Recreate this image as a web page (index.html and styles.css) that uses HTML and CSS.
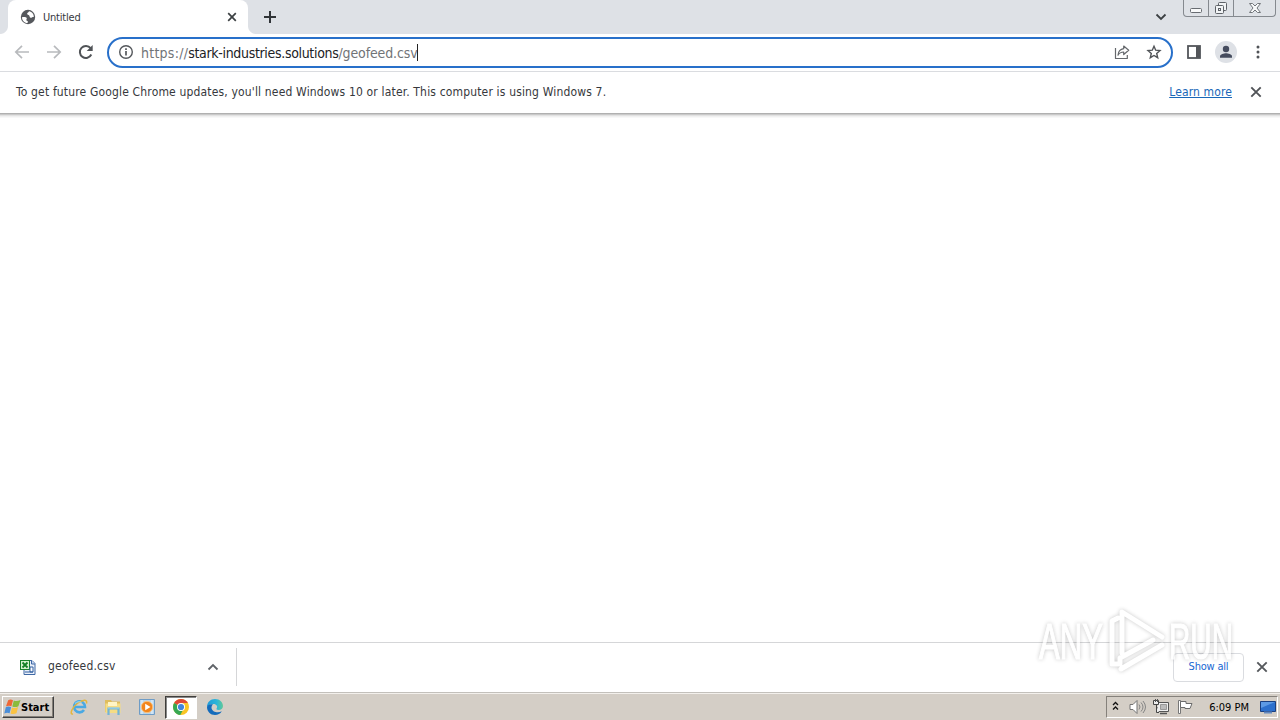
FILE: index.html
```html
<!DOCTYPE html>
<html lang="en">
<head>
<meta charset="utf-8">
<title>Untitled</title>
<link rel="stylesheet" href="styles.css">
</head>
<body>
<div class="screen">
  <header class="tabstrip">
    <div class="tab">
      <svg class="globe" width="16" height="16" viewBox="0 0 16 16"><circle cx="8" cy="8" r="7.200" fill="#55585c"/><path d="M2 8.200c1.800-.3 4.200-.3 4.700.8.4 1-.7 1.400-.3 2.300.4.700 1.700.5 1.500 1.700l-.5 1C4.300 13.800 2 11.500 2 8.200zM9 2.200c-.2 1.500-1.800 1.300-1.900 2.500-.1 1 1.400 1 2.100 1.800.7.900.1 1.900 1.300 2.200 1.200.3 1.500-.9 3.300-.7C14 5 12 2.700 9 2.200z" fill="#fff"/></svg>
      <span class="tab-title">Untitled</span>
      <svg class="tab-close" width="10" height="10" viewBox="0 0 10 10"><path d="M1.200 1.200l7.600 7.600M8.800 1.200L1.200 8.800" stroke="#3c4043" stroke-width="1.700"/></svg>
    </div>
    <svg class="newtab" width="14" height="14" viewBox="0 0 14 14"><path d="M7 1v12M1 7h12" stroke="#303438" stroke-width="2"/></svg>
    <svg class="tabsearch" width="12" height="8" viewBox="0 0 12 8"><path d="M1.500 1.500L6 6l4.500-4.500" fill="none" stroke="#3c4043" stroke-width="1.800"/></svg>
    <div class="caption">
      <span class="cap min"><svg width="14" height="14" viewBox="0 0 14 14"><rect x="1.500" y="6.500" width="11" height="4" rx="1" fill="#f8f9fa" stroke="#686c72"/></svg></span>
      <span class="cap max"><svg width="14" height="14" viewBox="0 0 14 14"><g fill="#f1f3f5" stroke="#5e6268"><rect x="4.500" y=".5" width="8" height="8" rx="1"/><rect x="1.500" y="3.500" width="8" height="8" rx="1"/><rect x="4.500" y="6.500" width="2" height="2"/></g></svg></span>
      <span class="cap cls"><svg width="14" height="14" viewBox="0 0 14 14"><path d="M1.500 1.500h3L7 4l2.500-2.500h3L9 6l3.500 4.500h-3L7 8l-2.500 2.500h-3L5 6z" fill="#f8f9fa" stroke="#72767b"/></svg></span>
    </div>
  </header>

  <div class="toolbar">
    <svg class="nav" width="16" height="16" viewBox="0 0 16 16"><path d="M15 8H2M8 1.800L1.800 8 8 14.200" fill="none" stroke="#b8babd" stroke-width="1.700"/></svg>
    <svg class="nav" width="16" height="16" viewBox="0 0 16 16"><path d="M1 8h13M8 1.800L14.200 8 8 14.200" fill="none" stroke="#b8babd" stroke-width="1.700"/></svg>
    <svg class="nav" width="16" height="16" viewBox="0 0 16 16"><path d="M13.300 10.500A6 6 0 1 1 12.600 4.200" fill="none" stroke="#505357" stroke-width="2"/><path d="M14.700 1v6H8.700z" fill="#505357"/></svg>
    <div class="omnibox">
      <svg class="info" width="16" height="16" viewBox="0 0 16 16"><circle cx="8" cy="8" r="6.300" fill="none" stroke="#55585c" stroke-width="1.400"/><path d="M8 7v4.500M8 4.200v1.700" stroke="#55585c" stroke-width="1.700"/></svg>
      <span class="url"><span class="scheme">https://</span><span class="host">stark-industries.solutions</span><span class="path">/geofeed.csv</span></span><i class="caret"></i>
      <svg class="share" width="16" height="16" viewBox="0 0 16 16"><path d="M1.500 4v10.500h11.800V11M9.700 2l5 4.300-5 4.200V8C7 8 5.200 9 4 11.200 4.300 7.500 6.300 5.200 9.700 4.700z" fill="none" stroke="#65686c" stroke-width="1.200" stroke-linejoin="round"/></svg>
      <svg class="star" width="16" height="16" viewBox="0 0 16 16"><path d="M8 2.200l1.700 4 4.300.4-3.300 2.900 1 4.200L8 11.500l-3.700 2.200 1-4.200L2 6.600l4.300-.4z" fill="none" stroke="#505357" stroke-width="1.400"/></svg>
    </div>
    <svg class="panel" width="14" height="14" viewBox="0 0 14 14"><rect x="1" y="1" width="12" height="12" fill="none" stroke="#53565a" stroke-width="1.800"/><path d="M9 1h4v12H9z" fill="#53565a"/></svg>
    <svg class="avatar" width="22" height="22" viewBox="0 0 22 22"><circle cx="11" cy="11" r="11" fill="#dee1e6"/><circle cx="11" cy="8" r="3.200" fill="#454c5e"/><path d="M5 16.700v-1.500c0-2 4-3 6-3s6 1 6 3v1.500z" fill="#454c5e"/></svg>
    <svg class="menu" width="4" height="14" viewBox="0 0 4 14"><g fill="#505357"><circle cx="2" cy="2" r="1.500"/><circle cx="2" cy="7" r="1.500"/><circle cx="2" cy="12" r="1.500"/></g></svg>
  </div>

  <div class="infobar">
    <span class="message">To get future Google Chrome updates, you'll need Windows 10 or later. This computer is using Windows 7.</span>
    <a class="learn">Learn more</a>
    <svg class="x" width="12" height="12" viewBox="0 0 12 12"><path d="M1.300 1.300l9.400 9.400M10.700 1.300l-9.400 9.400" stroke="#505357" stroke-width="1.900"/></svg>
  </div>

  <main class="page"></main>

  <div class="downloads">
    <div class="item">
      <svg class="file" width="16" height="16" viewBox="0 0 16 16"><path d="M4 1.500h8l3 3v11H4z" fill="#eaf0fb" stroke="#3f68a5"/><path d="M11.500 1.500V5H15" fill="#c9d9f3" stroke="#3f68a5"/><rect x=".5" y="1.500" width="9" height="9" fill="#d5f2cf" stroke="#17832a"/><path d="M2.500 3.500l5 5M7.500 3.500l-5 5" stroke="#128126" stroke-width="1.800"/><path d="M10 8h3v5h-3zM5 13h8" fill="#fff" stroke="#315e9e"/></svg>
      <span class="filename">geofeed.csv</span>
      <svg class="chev" width="12" height="8" viewBox="0 0 12 8"><path d="M1.500 6.500L6 2l4.500 4.500" fill="none" stroke="#5f6368" stroke-width="1.800"/></svg>
    </div>
    <span class="showall">Show all</span>
    <svg class="x" width="12" height="12" viewBox="0 0 12 12"><path d="M1.300 1.300l9.400 9.400M10.700 1.300l-9.400 9.400" stroke="#55585c" stroke-width="1.900"/></svg>
  </div>

  <footer class="taskbar">
    <div class="start">
      <svg width="17" height="16" viewBox="0 0 17 16"><path d="M4.200 1.300C6 0 7.500.5 9 1.200L7.400 7.300C6 6.500 4.400 6.400 2 7.300z" fill="#ef6735"/><path d="M9.800 1.500c1.700.8 4.200.7 6.700-.4L14.400 7.200c-2 1.100-4.500 1.100-6.100.3z" fill="#8abb3d"/><path d="M1.800 8.200c1.700-.9 3.900-.7 5.300.1l-1.500 6c-1.500-.8-3-.9-5.300.1z" fill="#4b8ed8"/><path d="M8 8.500c1.600.8 4.100.7 6.100-.4L12.500 14.300c-2 1.100-4.400 1-6 .2z" fill="#fac342"/></svg>
      <b>Start</b>
    </div>
    <div class="quick">
      <span class="task"><svg width="18" height="18" viewBox="0 0 18 18"><path d="M14 12A5.500 5.500 0 1 1 15 9H5" fill="none" stroke="#4aa9e3" stroke-width="2.600"/><path d="M3 16C-1 17 2 9 8 5s9.500-3.500 8.500.5" fill="none" stroke="#e3b63e" stroke-width="1.500"/><path d="M5 5.500c1.600-1.800 4.500-2.300 6.500-1" stroke="#a2dcf7" fill="none"/></svg></span>
      <span class="task"><svg width="18" height="18" viewBox="0 0 18 18"><path d="M1 2h6l1 1.500h8V14H1z" fill="#dfbd5d"/><path d="M1.500 5.500h15V15h-15z" fill="#f5dc84"/><path d="M4 4h9v4H4z" fill="#fff5c6"/><path d="M4.500 17v-6.500h10V17" fill="none" stroke="#72b4d6" stroke-width="2.200"/><path d="M4 10h11" stroke="#a5d9ee"/></svg></span>
      <span class="task"><svg width="18" height="18" viewBox="0 0 18 18"><path d="M1.500 1.500h15v15h-15z" fill="#b9d5ec" stroke="#6e9cc6"/><path d="M4 2v14M14 2v14" stroke="#e8f4fc"/><circle cx="9" cy="9" r="5.700" fill="#f2851c" stroke="#fac17e"/><path d="M7.200 5.700L12.500 9l-5.300 3.300z" fill="#fff"/></svg></span>
      <span class="task active"><svg width="18" height="18" viewBox="0 0 18 18"><circle cx="9" cy="9" r="8" fill="#f9c525"/><path d="M9 9L2.100 5A8 8 0 0 1 15.900 5H9z" fill="#df4937"/><path d="M9 9L2.100 5A8 8 0 0 0 8.300 17L12 10z" fill="#37a853"/><circle cx="9" cy="9" r="4" fill="#fff"/><circle cx="9" cy="9" r="3.100" fill="#4285dc"/></svg></span>
      <span class="task"><svg width="18" height="18" viewBox="0 0 18 18"><defs><linearGradient id="eg"><stop stop-color="#209bd9"/><stop offset=".6" stop-color="#2cb5d8"/><stop offset="1" stop-color="#62c997"/></linearGradient></defs><path d="M1 9C1 4 4.500 1 9 1c5 0 8 3.500 8 7 0 2.500-2 4-4.300 4-2 0-2.700-.7-2-1.700C12 8.500 10.500 6 7.500 6 4 6 1.500 7.500 1 9z" fill="url(#eg)"/><path d="M1 9c.5-2 3.300-3.200 6-2.400C4.500 8.500 5 13 9.500 14c2.500.6 4.500.2 6.300-.8C14.300 15.700 12 17 9 17 4.500 17 1 13.500 1 9z" fill="#146bbb"/></svg></span>
    </div>
    <div class="tray">
      <svg class="expand" width="7" height="10" viewBox="0 0 7 10"><path d="M1 4l2.500-2.500L6 4M1 8.500L3.500 6 6 8.500" fill="none" stroke="#111" stroke-width="1.300"/></svg>
      <svg class="vol" width="17" height="16" viewBox="0 0 17 16"><path d="M1 5.500h3l4-4v13l-4-4H1z" fill="#fff" stroke="#747474"/><path d="M10 5.500q2 2.500 0 5M12 3.500q4 4.500 0 9M14 2q5 6 0 12" fill="none" stroke="#858585"/></svg>
      <svg class="net" width="17" height="16" viewBox="0 0 17 16"><path d="M6 3.500h9.500v9H4.500V8" fill="#eee" stroke="#555"/><path d="M7.500 5.500h6v5h-6z" fill="#bbb" stroke="#999"/><path d="M7 14.500h7" stroke="#555" stroke-width="1.500"/><path d="M.5 1.500h5v4h-5zM3.500 5.500V13.500H6" fill="#eee" stroke="#444"/><path d="M2.500 0v3M4.500 0v3" stroke="#555"/></svg>
      <svg class="flag" width="17" height="16" viewBox="0 0 17 16"><path d="M1.500 1.500h2v13h-2z" fill="#fff" stroke="#777"/><path d="M3.500 2.500h5.500v2h6l-2 5H8v-1H3.500z" fill="#fff" stroke="#6b6b6b"/></svg>
      <span class="clock">6:09 PM</span>
      <svg class="desk" width="16" height="14" viewBox="0 0 16 14"><path d="M.5 1.500h15v10H.5z" fill="#2c70cd" stroke="#193f80"/><path d="M1 2h14L1 8z" fill="#5c9ae5"/><path d="M4 12.500h8" stroke="#6389bf" stroke-width="2"/></svg>
    </div>
  </footer>

  <svg class="watermark" width="230" height="92" viewBox="-10 -8 230 92">
    <g class="mark"><text x="9" y="55" textLength="64" lengthAdjust="spacingAndGlyphs">ANY</text><text x="139" y="55" textLength="64" lengthAdjust="spacingAndGlyphs">RUN</text>
    <path class="logo" d="M92 49V8l40 25M88 14l-6 3v43h8v-6L123 36M91 65l41-24"/></g>
  </svg>
</div>
</body>
</html>
```
FILE: styles.css
```css
* { box-sizing: border-box; }
body { margin: 0; overflow: hidden; }
svg { display: block; flex: none; }
.screen { position: relative; width: 1280px; height: 720px; display: flex; flex-direction: column; background: #fff; font-family: "DejaVu Sans Condensed", "DejaVu Sans", sans-serif; font-stretch: condensed; color: #36383c; }
.tabstrip { height: 34px; flex: none; display: flex; background: radial-gradient(circle at 0 26px, transparent 8px, #fff 8.500px) 248px 26px / 8px 8px no-repeat, #dee1e6; background: radial-gradient(circle at 100% 0, #dee1e6 7.500px, #fff 8.500px) 248px 26px / 8px 8px no-repeat, radial-gradient(circle at 0 0, #dee1e6 7.500px, #fff 8.500px) 0 26px / 8px 8px no-repeat, #dee1e6; }
.tab { width: 240px; height: 34px; margin-left: 8px; padding: 0 11px 0 12px; display: flex; align-items: center; background: #fff; border-radius: 8px 8px 0 0; }
.tab-title { margin-left: 7px; font-size: 11px; letter-spacing: -.2px; }
.tab-close { margin-left: auto; }
.newtab { margin: 10px 0 0 15px; }
.tabsearch { margin: 13px 16px 0 auto; }
.caption { display: flex; width: 93px; height: 17px; margin-right: 4px; border: 1px solid #85898f; border-top: 0; border-radius: 0 0 4px 4px; background: #dfe2e7; }
.cap { display: flex; justify-content: center; padding-top: 2px; }
.min, .max { border-right: 1px solid #85898f; }
.min { width: 25px; }
.max { width: 25px; }
.cls { flex: 1; }
.toolbar { height: 38px; flex: none; display: flex; align-items: center; padding: 0 20px 2px 14px; border-bottom: 1px solid #dadce0; }
.nav { margin-right: 16px; }
.omnibox { width: 1066px; height: 31px; margin-left: -3px; margin-top: 1px; border: 2px solid #2870ca; border-radius: 16px; display: flex; align-items: center; padding: 0 9px 0 9px; }
.url { margin-left: 7px; padding-top: 2px; font-size: 14px; white-space: nowrap; }
.scheme, .path { color: #717477; }
.scheme { letter-spacing: .25px; }
.host { color: #202124; letter-spacing: -.32px; }
.path { letter-spacing: -.13px; }
.caret { width: 1px; height: 17px; background: #222; }
.share { margin-left: auto; }
.star { margin-left: 16px; }
.panel { margin-left: 14px; }
.avatar { margin-left: 14px; }
.menu { margin-left: auto; }
.infobar { height: 41px; flex: none; display: flex; align-items: center; padding: 0 18px 1px 16px; }
.message { font-size: 12px; letter-spacing: .162px; white-space: nowrap; }
.learn { margin-left: auto; margin-right: 18px; font-size: 12px; letter-spacing: .13px; color: #1967b8; text-decoration: underline; }
.page { flex: 1; background: linear-gradient(#b0b0b0 0 1px, #c9c9c9 1px 2px, #e2e2e2 2px 3px, #f0f0f0 3px 4px, #f8f8f8 4px 5px, #fff 5px); }
.downloads { height: 50px; flex: none; border-top: 1px solid #d5d6d8; display: flex; align-items: center; padding: 0 12px 1px 0; }
.item { width: 237px; height: 38px; padding: 0 18px 0 20px; display: flex; align-items: center; border-right: 1px solid #d5d6d8; }
.filename { margin-left: 12px; font-size: 12px; letter-spacing: .2px; position: relative; top: -1px; }
.chev { margin-left: auto; margin-right: -1px; }
.showall { width: 71px; height: 29px; margin-left: auto; margin-right: 12px; border: 1px solid #dadce0; border-radius: 4px; font-size: 11px; line-height: 26px; letter-spacing: -.2px; text-align: center; color: #1967d2; }
.taskbar { height: 28px; flex: none; display: flex; align-items: center; padding: 1px 2px 0 2px; background: #d4cec6; border-top: 1px solid #c3c0bb; box-shadow: inset 0 1px #f3f0ec; color: #000; }
.start { width: 52px; height: 22px; display: flex; align-items: center; padding-left: 1px; border: 1px solid; border-color: #fff #404040 #404040 #fff; box-shadow: inset -1px -1px #858078; font-size: 11px; }
.quick { display: flex; margin-left: 8px; }
.task { width: 34px; height: 23px; display: flex; align-items: center; justify-content: center; }
.active { width: 32px; margin: 0 1px; background: #fff; border: 1px solid; border-color: #403e3b #fff #fff #403e3b; box-shadow: inset 1px 1px #888; }
.tray { width: 172px; height: 22px; margin-left: auto; display: flex; align-items: center; border: 1px solid; border-color: #85817b #fff #fff #85817b; padding: 0 1px 0 5px; }
.expand { margin-bottom: 2px; }
.vol { margin-left: 10px; }
.net { margin-left: 7px; }
.flag { margin-left: 7px; }
.clock { margin-left: auto; margin-right: 11px; font-size: 11px; white-space: nowrap; }
.watermark { position: absolute; left: 1020px; top: 596px; pointer-events: none; }
.mark { filter: drop-shadow(0 0 2px rgba(0,0,0,.3)); opacity: .72; }
.mark text { font-family: "Liberation Sans", sans-serif; font-size: 50px; fill: #fff; stroke: #fff; stroke-width: 1.2; }
.logo { fill: none; stroke: #fff; stroke-width: 5; stroke-linejoin: round; stroke-linecap: round; }
```
